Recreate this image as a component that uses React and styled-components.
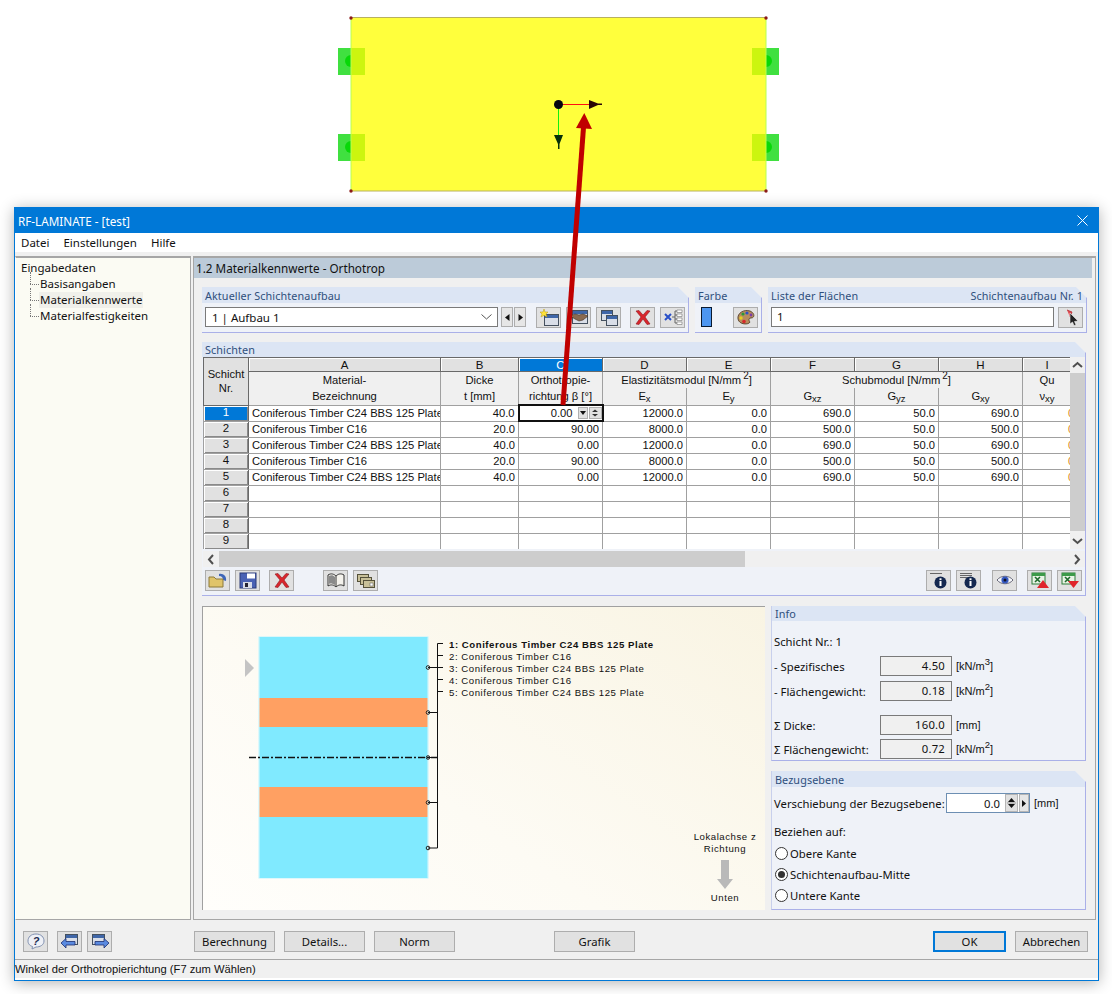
import React from 'react';
import styled, { createGlobalStyle } from 'styled-components';

const Global = createGlobalStyle`
  html, body { margin: 0; padding: 0; background: #fff; }
  * { box-sizing: border-box; }
  #root { font-family: "Liberation Sans", Arial, sans-serif; font-size: 11.5px; color: #111; }
`;

const Page = styled.div`
  position: relative;
  width: 1112px;
  height: 994px;
  overflow: hidden;
  background: #fff;
`;
const Canvas = styled.svg`
  display: block;
`;
const Window = styled.div`
  width: 1085px;
  height: 774px;
  margin-left: 14px;
  border: 1px solid #0078d7;
  background: #f0f0f0;
  box-shadow: 0 2px 14px rgba(0, 0, 0, 0.3);
  display: flex;
  flex-direction: column;
`;
const TitleBar = styled.div`
  height: 25px;
  flex: none;
  background: #0078d7;
  color: #fff;
  display: flex;
  align-items: center;
  justify-content: space-between;
  padding: 0 10px 0 3px;
  font-family: "Noto Sans", sans-serif;
  font-size: 11.7px;
`;
const MenuBar = styled.div`
  height: 19px;
  flex: none;
  background: #fff;
  display: flex;
  align-items: center;
  gap: 14px;
  padding: 0 0 0 6px;
  font-family: "Noto Sans", sans-serif;
  font-size: 11.5px;
`;
const Body = styled.div`
  height: 668px;
  flex: none;
  display: flex;
  gap: 2px;
  padding-top: 4px;
`;
const TreePane = styled.div`
  width: 176px;
  background: #fbfbf3;
  border: 1px solid #a6a6a6;
  border-top-width: 2px;
  border-left-color: #fff;
  padding: 2px 0 0 5px;
  font-family: "Noto Sans", sans-serif;
  font-size: 11.5px;
`;
const TreeRoot = styled.div`
  height: 16px;
  line-height: 15px;
`;
const TreeItem = styled.div`
  position: relative;
  height: 16px;
  line-height: 16px;
  margin-left: 18px;
  padding: 0 1px;
  width: fit-content;
  background: ${p => (p.$sel ? '#f0f0ea' : 'transparent')};
  &::before {
    content: '';
    position: absolute;
    left: -9px;
    top: 8px;
    width: 9px;
    border-top: 1px dotted #777;
  }
  &::after {
    content: '';
    position: absolute;
    left: -9px;
    top: -4px;
    height: 12px;
    border-left: 1px dotted #777;
  }
`;
const MainPane = styled.div`
  width: 903px;
  border: 1px solid #a6a6a6;
  border-top-width: 2px;
  display: flex;
  flex-direction: column;
  padding-right: 0;
`;
const SectionTitle = styled.div`
  height: 20px;
  flex: none;
  margin-right: 3px;
  background: #bccbd9;
  padding-left: 2px;
  line-height: 20px;
  font-family: "Noto Sans", sans-serif;
  font-size: 11.7px;
`;
const Content = styled.div`
  padding: 9px 8px 0 8px;
  display: flex;
  flex-direction: column;
`;
const GroupRow = styled.div`
  display: flex;
  gap: 6px;
  height: 46px;
  flex: none;
`;
const Group = styled.div`
  width: ${p => p.$w}px;
  height: ${p => (p.$h ? p.$h + 'px' : 'auto')};
  flex: none;
  display: flex;
  flex-direction: column;
  background: #eff2f8;
  border-right: 1px solid #aab0e8;
  border-bottom: 1px solid #aab0e8;
  clip-path: polygon(0 0, calc(100% - 11px) 0, 100% 11px, 100% 100%, 0 100%);
  margin-top: ${p => p.$mt || 0}px;
`;
const GroupHead = styled.div`
  height: ${p => p.$h || 16}px;
  flex: none;
  background: #dce5f4;
  color: #2f4f7c;
  padding: 0 3px 0 3px;
  display: flex;
  justify-content: space-between;
  align-items: center;
  font-family: "Noto Sans", sans-serif;
  font-size: 10.8px;
  letter-spacing: 0.1px;
`;
const GroupBody = styled.div`
  flex: 1;
  display: flex;
  align-items: flex-start;
  padding: 4px 3px 0 3px;
`;
const Combo = styled.div`
  width: 293px;
  height: 20px;
  background: #fff;
  border: 1px solid #7a7a7a;
  display: flex;
  align-items: center;
  justify-content: space-between;
  padding: 0 5px 0 6px;
  font-family: "Noto Sans", sans-serif;
  font-size: 11.5px;
`;
const NavBtn = styled.div`
  width: 12px;
  height: 20px;
  margin-left: ${p => p.$ml || 0}px;
  background: #e6e6e6;
  border: 1px solid #adadad;
  display: flex;
  align-items: center;
  justify-content: center;
`;
const IconBtn = styled.div`
  width: 25px;
  height: 21px;
  flex: none;
  margin-left: ${p => p.$ml || 0}px;
  background: #e1e1e1;
  border: 1px solid #adadad;
  display: flex;
  align-items: center;
  justify-content: center;
`;
const Swatch = styled.div`
  width: 12px;
  height: 20px;
  margin: 0 21px 0 3px;
  background: #4d96f0;
  border: 1px solid #0a1a30;
`;
const TextInput = styled.div`
  width: 284px;
  height: 20px;
  margin-right: 4px;
  background: #fff;
  border: 1px solid #7a7a7a;
  padding-left: 5px;
  line-height: 18px;
  font-family: "Noto Sans", sans-serif;
  font-size: 11.5px;
`;
const TableGroup = styled(Group)`
  height: 254px;
  background: #eff2f8;
  margin-top: 9px;
`;
const TableArea = styled.div`
  display: flex;
  height: 192px;
  margin-left: 1px;
  flex: none;
`;
const TableClip = styled.div`
  width: 867px;
  height: 192px;
  overflow: hidden;
  background: #fff;
`;
const Table = styled.table`
  table-layout: fixed;
  width: 868px;
  border-collapse: collapse;
  font-size: 11.2px;
  & col:nth-child(1) { width: 45px; }
  & col:nth-child(2) { width: 192px; }
  & col:nth-child(3) { width: 78px; }
  & col:nth-child(n+4):nth-child(-n+9) { width: 84px; }
  & col:nth-child(10) { width: 49px; }
`;
const Corner = styled.th`
  background: #e1e1e1;
  border: 1px solid #696969;
  font-weight: normal;
  padding: 0 0 0 0;
  line-height: 14px;
  vertical-align: middle;
`;
const Letter = styled.th`
  height: 14px;
  padding: 0;
  line-height: 12px;
  font-weight: normal;
  font-size: 11.5px;
  background: ${p => (p.$active ? '#0078d7' : '#e1e1e1')};
  color: ${p => (p.$active ? '#fff' : '#111')};
  border: 1px solid #696969;
  box-shadow: inset 1px 1px 0 #fff;
`;
const SubHead = styled.th`
  background: #f0f0f0;
  font-weight: normal;
  padding: 0;
  height: 16px;
  line-height: 16px;
  border-left: 1px solid #a0a0a0;
  border-right: 1px solid #a0a0a0;
  border-bottom: 1px solid #a0a0a0;
  white-space: nowrap;
  overflow: hidden;
  sup { font-size: 10px; line-height: 0; margin-left: 2px; }
  sub { font-size: 9.5px; line-height: 0; vertical-align: -2px; }
`;
const RowHead = styled.td`
  height: 16px;
  padding: 0 0 2px 0;
  line-height: 12px;
  text-align: center;
  font-size: 11.5px;
  background: ${p => (p.$active ? '#0078d7' : '#e1e1e1')};
  color: ${p => (p.$active ? '#fff' : '#111')};
  border: 1px solid #a0a0a0;
  border-right: 1px solid #696969;
  box-shadow: inset 1px 1px 0 #fff, inset -1px -1px 0 #8a8a8a;
`;
const Cell = styled.td`
  height: 16px;
  padding: 0 3px;
  line-height: 12px;
  text-align: ${p => (p.$left ? 'left' : 'right')};
  border: 1px solid #a0a0a0;
  white-space: nowrap;
  overflow: hidden;
  background: #fff;
`;
const ClippedCell = styled(Cell)`
  text-align: left;
  padding: 0 0 0 45px;
  color: #d98a1f;
`;
const ActiveCell = styled.td`
  height: 16px;
  padding: 0;
  border: 2px solid #111;
  background: #fff;
`;
const ActiveInner = styled.div`
  display: flex;
  align-items: center;
  justify-content: flex-end;
  height: 13px;
  line-height: 12px;
`;
const DropBtn = styled.span`
  width: 10px;
  height: 12px;
  margin-left: 5px;
  background: #e1e1e1;
  border: 1px solid #b0b0b0;
  display: flex;
  align-items: center;
  justify-content: center;
`;
const CellSpin = styled.span`
  width: 13px;
  height: 12px;
  margin-left: 1px;
  background: #e1e1e1;
  border: 1px solid #b0b0b0;
  display: flex;
  align-items: center;
  justify-content: center;
`;
const VScroll = styled.div`
  width: 15px;
  height: 192px;
  flex: none;
  background: #f0f0f0;
  display: flex;
  flex-direction: column;
`;
const ScrollBtn = styled.div`
  flex: none;
  width: ${p => p.$w || 15}px;
  height: ${p => p.$h || 15}px;
  display: flex;
  align-items: center;
  justify-content: center;
  background: #f0f0f0;
`;
const VThumb = styled.div`
  height: 158px;
  flex: none;
  background: #cdcdcd;
`;
const HScroll = styled.div`
  height: 16px;
  margin: 2px 0 0 1px;
  width: 882px;
  flex: none;
  background: #f0f0f0;
  display: flex;
  align-items: center;
  justify-content: space-between;
`;
const HThumb = styled.div`
  width: 526px;
  height: 16px;
  background: #cdcdcd;
`;
const HTrack = styled.div`
  flex: 1;
`;
const TableToolbar = styled.div`
  display: flex;
  align-items: center;
  padding: 3px 3px 0 3px;
  background: #eff2f8;
`;
const Grow = styled.div`
  flex: 1;
`;
const Split = styled.div`
  display: flex;
  gap: 6px;
  margin-top: 10px;
  height: 304px;
`;
const Preview = styled.div`
  position: relative;
  width: 563px;
  height: 304px;
  border-left: 1px solid #a0a0a0;
  border-top: 1px solid #a0a0a0;
  background: linear-gradient(35deg, #fffefb 0%, #fdfbf4 40%, #f9f4e3 100%);
`;
const LegendSvg = styled.svg`
  display: block;
  font-family: "Liberation Sans", Arial, sans-serif;
  font-size: 9.6px;
  letter-spacing: 0.55px;
  fill: #111;
`;
const SideCol = styled.div`
  display: flex;
  flex-direction: column;
  gap: 10px;
  width: 315px;
`;
const SideGroup = styled(Group)`
  border-left: 1px solid #c8d0ec;
`;
const InfoBody = styled.div`
  padding: 6px 2px 0 2px;
  font-family: "Noto Sans", sans-serif;
  font-size: 11.3px;
`;
const InfoLine = styled.div`
  height: 20px;
  display: flex;
  align-items: center;
  margin-top: ${p => p.$mt ?? 4}px;
`;
const InfoLabel = styled.div`
  width: 106px;
  flex: none;
`;
const ReadField = styled.div`
  width: 72px;
  height: 20px;
  flex: none;
  background: #f0f0f0;
  border: 1px solid #7a7a7a;
  text-align: right;
  padding-right: 6px;
  line-height: 18px;
  font-family: "Noto Sans", sans-serif;
  letter-spacing: 0.2px;
`;
const Unit = styled.div`
  margin-left: 4px;
  font-family: "Liberation Sans", Arial, sans-serif;
  font-size: 11px;
  sup { font-size: 9.5px; line-height: 0; }
`;
const RefBody = styled(InfoBody)`
  padding-top: 6px;
`;
const OffsetInput = styled.div`
  width: 84px;
  height: 20px;
  flex: none;
  background: #fff;
  border: 1px solid #6d8fb3;
  display: flex;
  align-items: center;
  justify-content: flex-end;
  padding-right: 0;
`;
const OffsetValue = styled.span`
  margin-right: 5px;
`;
const SpinBtn = styled.div`
  width: 13px;
  height: 18px;
  background: #e1e1e1;
  border: 1px solid #b5b5b5;
  display: flex;
  align-items: center;
  justify-content: center;
`;
const ArrowBtn = styled.div`
  width: 10px;
  height: 18px;
  margin: 0 0 0 1px;
  background: #e6e6e6;
  border: 1px solid #b5b5b5;
  display: flex;
  align-items: center;
  justify-content: center;
`;
const OffsetLabel = styled.div`
  width: 172px;
  flex: none;
`;
const RefLabel = styled.div`
  height: 16px;
  line-height: 16px;
  margin-top: 11px;
`;
const RadioRow = styled.div`
  display: flex;
  align-items: center;
  height: 16px;
  margin-top: 5px;
  gap: 2px;
  margin-left: 1px;
`;
const Radio = styled.span`
  width: 13px;
  height: 13px;
  flex: none;
  border-radius: 50%;
  background: #fff;
  border: 1px solid #333;
  display: flex;
  align-items: center;
  justify-content: center;
  &::after {
    content: '';
    display: ${p => (p.$on ? 'block' : 'none')};
    width: 7px;
    height: 7px;
    border-radius: 50%;
    background: #333;
  }
`;
const Footer = styled.div`
  height: 39px;
  flex: none;
  display: flex;
  align-items: flex-start;
  padding: 11px 0 0 8px;
`;
const TextBtn = styled.div`
  width: ${p => p.$w || 81}px;
  height: 21px;
  flex: none;
  margin-left: ${p => p.$ml || 0}px;
  background: #e1e1e1;
  border: ${p => (p.$primary ? '2px solid #0078d7' : '1px solid #adadad')};
  display: flex;
  align-items: center;
  justify-content: center;
  font-family: "Noto Sans", sans-serif;
  font-size: 11.3px;
`;
const StatusBar = styled.div`
  height: 21px;
  flex: none;
  border-top: 1px solid #a6a6a6;
  border-bottom: 2px solid #fff;
  line-height: 18px;
  font-size: 11.2px;
  white-space: nowrap;
`;
const Overlay = styled.svg`
  position: absolute;
  left: 0;
  top: 0;
  pointer-events: none;
`;

const Ico = ({ children }) => (
  <svg width="20" height="17" viewBox="0 0 20 17">{children}</svg>
);
const Win = ({ x, y, w, h }) => (
  <g>
    <rect x={x + 0.5} y={y + 0.5} width={w} height={h} fill="#d9dee8" stroke="#44505f" />
    <rect x={x + 1} y={y + 1} width={w - 1} height="3" fill="#3f66a8" />
  </g>
);
const Cross = () => (
  <path d="M3 2 L6 1.5 L10 6 L14 1.5 L17 2 L12 8 L17 15 L14 15.5 L10 10 L6 15.5 L3 15 L8 8 Z" fill="#d9262c" stroke="#8e1a20" strokeWidth=".6" />
);
const TriL = () => <svg width="5" height="7" viewBox="0 0 5 7"><path d="M4.5 0 L0 3.5 L4.5 7Z" fill="#111" /></svg>;
const TriR = () => <svg width="5" height="7" viewBox="0 0 5 7"><path d="M.5 0 L5 3.5 L.5 7Z" fill="#111" /></svg>;
const Chevron = ({ dir }) => {
  const d = { up: 'M1 7 L5.5 3 L10 7', down: 'M1 3 L5.5 7 L10 3', left: 'M7 1 L3 5.5 L7 10', right: 'M3 1 L7 5.5 L3 10' }[dir];
  return <svg width="11" height="11" viewBox="0 0 11 11"><path d={d} fill="none" stroke="#505050" strokeWidth="2" /></svg>;
};
const Spin = () => (
  <svg width="9" height="14" viewBox="0 0 9 14">
    <path d="M1 6 L4.5 2 L8 6Z M1 8 L4.5 12 L8 8Z" fill="#111" />
    <path d="M0 7 H9" stroke="#999" />
  </svg>
);
const Excel = ({ up }) => (
  <Ico>
    <rect x="2" y="1" width="13" height="11" fill="#e8f3e4" stroke="#2f7d3a" />
    <rect x="2" y="1" width="13" height="3" fill="#3c9a48" />
    <path d="M5 5 L10 10 M10 5 L5 10" stroke="#1f6a2c" strokeWidth="1.6" />
    <path d={up ? 'M13 8 L19 16 H7Z' : 'M8 9 H19 L13.5 16Z'} fill="#e0242a" />
  </Ico>
);
const InfoIco = ({ lines }) => (
  <Ico>
    {Array.from({ length: lines }).map((_, i) => (
      <path key={i} d={`M1 ${1.5 + i * 2} H13`} stroke="#666" />
    ))}
    <circle cx="11.5" cy="10.5" r="6" fill="#14284f" />
    <rect x="10.5" y="9" width="2" height="5" fill="#fff" />
    <rect x="10.5" y="6.3" width="2" height="1.8" fill="#fff" />
  </Ico>
);

const rows = [
  [1, 'Coniferous Timber C24 BBS 125 Plate', '40.0', '0.00', '12000.0', '0.0', '690.0', '50.0', '690.0'],
  [2, 'Coniferous Timber C16', '20.0', '90.00', '8000.0', '0.0', '500.0', '50.0', '500.0'],
  [3, 'Coniferous Timber C24 BBS 125 Plate', '40.0', '0.00', '12000.0', '0.0', '690.0', '50.0', '690.0'],
  [4, 'Coniferous Timber C16', '20.0', '90.00', '8000.0', '0.0', '500.0', '50.0', '500.0'],
  [5, 'Coniferous Timber C24 BBS 125 Plate', '40.0', '0.00', '12000.0', '0.0', '690.0', '50.0', '690.0'],
  [6], [7], [8], [9],
];
const letters = ['A', 'B', 'C', 'D', 'E', 'F', 'G', 'H', 'I'];
const legend = [
  '1: Coniferous Timber C24 BBS 125 Plate',
  '2: Coniferous Timber C16',
  '3: Coniferous Timber C24 BBS 125 Plate',
  '4: Coniferous Timber C16',
  '5: Coniferous Timber C24 BBS 125 Plate',
];

const Plate = () => {
  const pads = [[338, 48], [338, 134], [752, 48], [752, 134]];
  return (
    <Canvas width="1112" height="207">
      {pads.map(([x, y], i) => (
        <g key={i}>
          <rect x={x} y={y} width="27" height="27" fill="#40e040" />
          <circle cx={i < 2 ? 351 : 766} cy={y + 13} r="6" fill="#08d808" />
        </g>
      ))}
      <rect x="351" y="18" width="415" height="173" fill="#ffff3c" />
      {pads.map(([x, y], i) => (
        <rect key={i} x={i < 2 ? 351 : x} y={y} width={i < 2 ? 14 : 14} height="27" fill="#ccf50f" />
      ))}
      <path d="M351 18 V191 M766 18 V191" stroke="#b8ff50" />
      <path d="M351 17.5 H766 M351 191 H766" stroke="#b8b060" />
      {[[351, 18], [766, 18], [351, 191], [766, 191]].map(([x, y], i) => (
        <circle key={i} cx={x} cy={y} r="1.7" fill="#8a1a1a" />
      ))}
      <path d="M558 104.5 H589" stroke="#ff1010" strokeWidth="1" />
      <path d="M558.5 105 V135" stroke="#10f010" strokeWidth="1" />
      <circle cx="558.5" cy="104.5" r="4.5" fill="#050510" />
      <path d="M589 100 L598 103.5 H602 V105 H598 L589 109Z" fill="#2a0606" />
      <path d="M554 135 H563 L559.5 144 V149 H558 V144Z" fill="#06300a" />
    </Canvas>
  );
};

const StackDrawing = () => {
  const ox = 203, oy = 607;
  const X = v => v - ox, Y = v => v - oy;
  const layers = [[637, 61, '#80eaff'], [698, 29, '#ffa062'], [727, 60, '#80eaff'], [787, 30, '#ffa062'], [817, 61, '#80eaff']];
  return (
    <LegendSvg width="562" height="303">
      <rect x={X(259)} y={Y(637)} width="169" height="241" fill="none" stroke="#bdf3ff" strokeWidth="1" />
      {layers.map(([y, h, c], i) => <rect key={i} x={X(259.5)} y={Y(y)} width="168" height={h} fill={c} />)}
      <path d={`M${X(245)} ${Y(659)} L${X(254)} ${Y(668)} L${X(245)} ${Y(677)}Z`} fill="#c4c4c4" />
      <path d={`M${X(443)} ${Y(643.5)} H${X(437.5)} V${Y(848)} H${X(428)}`} fill="none" stroke="#111" />
      {[655.5, 667.5, 679.5, 691.5].map(y => <path key={y} d={`M${X(438)} ${Y(y)} H${X(443)}`} stroke="#111" />)}
      {[667.5, 712.5, 757.5, 802.5].map(y => <path key={y} d={`M${X(428)} ${Y(y)} H${X(438)}`} stroke="#111" />)}
      {[667.5, 712.5, 757.5, 802.5, 848].map(y => <circle key={y} cx={X(428)} cy={Y(y)} r="1.8" fill="none" stroke="#222" />)}
      <path d={`M${X(249)} ${Y(757.5)} H${X(437)}`} stroke="#111" strokeWidth="1.6" strokeDasharray="7 2 2 2" />
      {legend.map((t, i) => (
        <text key={i} x={X(449)} y={Y(647.5 + i * 12)} fontWeight={i === 0 ? 'bold' : 'normal'}>{t}</text>
      ))}
      <text x={X(725)} y={Y(840)} textAnchor="middle">Lokalachse z</text>
      <text x={X(725)} y={Y(852)} textAnchor="middle">Richtung</text>
      <path d={`M${X(721)} ${Y(860)} H${X(729)} V${Y(879)} H${X(733)} L${X(725)} ${Y(889)} L${X(717)} ${Y(879)} H${X(721)}Z`} fill="#b9b9b9" />
      <text x={X(725)} y={Y(901)} textAnchor="middle">Unten</text>
    </LegendSvg>
  );
};

export default function App() {
  return (
    <Page>
      <Global />
      <Plate />
      <Window>
        <TitleBar>
          <span>RF-LAMINATE - [test]</span>
          <svg width="11" height="11" viewBox="0 0 11 11"><path d="M.5 .5 L10.5 10.5 M10.5 .5 L.5 10.5" stroke="#fff" strokeWidth="1" /></svg>
        </TitleBar>
        <MenuBar><span>Datei</span><span>Einstellungen</span><span>Hilfe</span></MenuBar>
        <Body>
          <TreePane>
            <TreeRoot>Eingabedaten</TreeRoot>
            <TreeItem>Basisangaben</TreeItem>
            <TreeItem $sel>Materialkennwerte</TreeItem>
            <TreeItem>Materialfestigkeiten</TreeItem>
          </TreePane>
          <MainPane>
            <SectionTitle>1.2 Materialkennwerte - Orthotrop</SectionTitle>
            <Content>
              <GroupRow>
                <Group $w={487}>
                  <GroupHead>Aktueller Schichtenaufbau</GroupHead>
                  <GroupBody>
                    <Combo>
                      <span>1 | Aufbau 1</span>
                      <svg width="11" height="6" viewBox="0 0 11 6"><path d="M.5 .5 L5.5 5 L10.5 .5" fill="none" stroke="#555" /></svg>
                    </Combo>
                    <NavBtn $ml={3}><TriL /></NavBtn>
                    <NavBtn $ml={1}><TriR /></NavBtn>
                    <IconBtn $ml={10}>
                      <Ico>
                        <Win x={5} y={5} w={14} h={11} />
                        <path d="M5 0 L6 3 L9 3 L7 5 L8 8 L5 6.3 L2 8 L3 5 L1 3 L4 3Z" fill="#ffe23a" stroke="#b89a10" strokeWidth=".5" />
                      </Ico>
                    </IconBtn>
                    <IconBtn $ml={5}>
                      <Ico>
                        <Win x={3} y={1} w={15} h={13} />
                        <path d="M1 7 L6 5 L10 6 L14 5 L19 7 L14 11 L10 12 L6 10Z" fill="#8a6a50" stroke="#3c2c20" strokeWidth=".6" />
                      </Ico>
                    </IconBtn>
                    <IconBtn $ml={5}>
                      <Ico>
                        <Win x={2} y={1} w={11} h={10} />
                        <Win x={7} y={6} w={11} h={10} />
                      </Ico>
                    </IconBtn>
                    <IconBtn $ml={9}><Ico><Cross /></Ico></IconBtn>
                    <IconBtn $ml={5}>
                      <Ico>
                        <path d="M2 5 L8 11 M8 5 L2 11" stroke="#2a50c8" strokeWidth="2" />
                        <path d="M9 8 H12 M12 2 V14 M12 2 H14 M12 6 H14 M12 10 H14 M12 14 H14" stroke="#666" fill="none" />
                        <path d="M14 1 H19 V3.5 H14Z M14 5 H19 V7.5 H14Z M14 9 H19 V11.5 H14Z M14 13 H19 V15.5 H14Z" fill="#fff" stroke="#777" strokeWidth=".6" />
                      </Ico>
                    </IconBtn>
                  </GroupBody>
                </Group>
                <Group $w={67}>
                  <GroupHead>Farbe</GroupHead>
                  <GroupBody>
                    <Swatch />
                    <IconBtn>
                      <Ico>
                        <path d="M2 10 C1 4 8 0 14 2 C19 4 19 9 15 9 C12 9 13 12 14 13 C13 16 3 16 2 10Z" fill="#b78d5e" stroke="#4a3520" strokeWidth=".8" />
                        <circle cx="7" cy="5" r="1.6" fill="#2b9a3a" />
                        <circle cx="11" cy="4" r="1.6" fill="#2a50c8" />
                        <circle cx="15" cy="6" r="1.4" fill="#7a3aa8" />
                        <circle cx="5" cy="9" r="1.7" fill="#e6d020" />
                        <circle cx="8" cy="12.5" r="1.8" fill="#d6282c" />
                      </Ico>
                    </IconBtn>
                  </GroupBody>
                </Group>
                <Group $w={319}>
                  <GroupHead><span>Liste der Flächen</span><span>Schichtenaufbau Nr. 1</span></GroupHead>
                  <GroupBody>
                    <TextInput>1</TextInput>
                    <IconBtn>
                      <Ico>
                        <path d="M6 1 L11 3 L9 8" fill="#e04a50" stroke="#b02a30" strokeWidth=".8" />
                        <path d="M9 4 L17 12 L13.5 12.5 L15 16 L13 16.5 L11.5 13 L9 15Z" fill="#222" stroke="#eee" strokeWidth=".6" />
                      </Ico>
                    </IconBtn>
                  </GroupBody>
                </Group>
              </GroupRow>
              <TableGroup $w={884}>
                <GroupHead $h={15}>Schichten</GroupHead>
                <TableArea>
                  <TableClip>
                    <Table>
                      <colgroup>
                        <col /><col /><col /><col /><col /><col /><col /><col /><col /><col />
                      </colgroup>
                      <thead>
                        <tr>
                          <Corner rowSpan={3}>Schicht<br />Nr.</Corner>
                          {letters.map(l => <Letter key={l} $active={l === 'C'}>{l}</Letter>)}
                        </tr>
                        <tr>
                          <SubHead rowSpan={2}>Material-<br />Bezeichnung</SubHead>
                          <SubHead rowSpan={2}>Dicke<br />t [mm]</SubHead>
                          <SubHead rowSpan={2}>Orthotropie-<br />richtung β [°]</SubHead>
                          <SubHead colSpan={2} style={{ borderBottom: 0 }}>Elastizitätsmodul [N/mm<sup>2</sup>]</SubHead>
                          <SubHead colSpan={3} style={{ borderBottom: 0 }}>Schubmodul [N/mm<sup>2</sup>]</SubHead>
                          <SubHead style={{ borderBottom: 0 }}>Qu</SubHead>
                        </tr>
                        <tr>
                          <SubHead>E<sub>x</sub></SubHead>
                          <SubHead>E<sub>y</sub></SubHead>
                          <SubHead>G<sub>xz</sub></SubHead>
                          <SubHead>G<sub>yz</sub></SubHead>
                          <SubHead>G<sub>xy</sub></SubHead>
                          <SubHead>ν<sub>xy</sub></SubHead>
                        </tr>
                      </thead>
                      <tbody>
                        {rows.map((r, i) => (
                          <tr key={r[0]}>
                            <RowHead $active={i === 0}>{r[0]}</RowHead>
                            <Cell $left>{r[1]}</Cell>
                            <Cell>{r[2]}</Cell>
                            {i === 0 ? (
                              <ActiveCell>
                                <ActiveInner>
                                  <span>0.00</span>
                                  <DropBtn><svg width="6" height="4" viewBox="0 0 6 4"><path d="M0 0 H6 L3 4Z" fill="#111" /></svg></DropBtn>
                                  <CellSpin><svg width="8" height="8" viewBox="0 0 8 8"><path d="M1 3 L4 .5 L7 3Z M1 5 L4 7.5 L7 5Z" fill="#333" /></svg></CellSpin>
                                </ActiveInner>
                              </ActiveCell>
                            ) : (
                              <Cell>{r[3]}</Cell>
                            )}
                            <Cell>{r[4]}</Cell>
                            <Cell>{r[5]}</Cell>
                            <Cell>{r[6]}</Cell>
                            <Cell>{r[7]}</Cell>
                            <Cell>{r[8]}</Cell>
                            <ClippedCell>{r[1] ? '0.000' : ''}</ClippedCell>
                          </tr>
                        ))}
                      </tbody>
                    </Table>
                  </TableClip>
                  <VScroll>
                    <ScrollBtn $h={16}><Chevron dir="up" /></ScrollBtn>
                    <VThumb />
                    <Grow />
                    <ScrollBtn $h={16}><Chevron dir="down" /></ScrollBtn>
                  </VScroll>
                </TableArea>
                <HScroll>
                  <ScrollBtn $w={16} $h={16}><Chevron dir="left" /></ScrollBtn>
                  <HThumb />
                  <HTrack />
                  <ScrollBtn $w={15} $h={16}><Chevron dir="right" /></ScrollBtn>
                </HScroll>
                <TableToolbar>
                  <IconBtn>
                    <Ico>
                      <path d="M11 2 C15 1 19 4 18 9 L15 8 C15 6 14 4 11 4Z" fill="#3f66b8" />
                      <path d="M1 5 H6 L8 7 H15 V15 H1Z" fill="#e0c46a" stroke="#8d7a3a" />
                    </Ico>
                  </IconBtn>
                  <IconBtn $ml={5}>
                    <Ico>
                      <rect x="2" y="1" width="16" height="15" fill="#4a62b4" stroke="#2a3a78" />
                      <rect x="9" y="1.5" width="8" height="5" fill="#fff" />
                      <rect x="5" y="10" width="9" height="6" fill="#d8dce8" />
                      <rect x="7" y="11" width="3" height="4" fill="#223" />
                    </Ico>
                  </IconBtn>
                  <IconBtn $ml={9}><Ico><Cross /></Ico></IconBtn>
                  <IconBtn $ml={29}>
                    <Ico>
                      <path d="M2 3 C5 1 8 2 10 4 C12 2 15 1 18 3 V14 C15 12 12 13 10 15 C8 13 5 12 2 14Z" fill="#f4f2ec" stroke="#333" />
                      <path d="M10 4 V15" stroke="#333" />
                      <path d="M3 4 C5 3 7 3 9 5 V13 C7 12 5 11 3 12Z" fill="#8a8a8a" />
                    </Ico>
                  </IconBtn>
                  <IconBtn $ml={5}>
                    <Ico>
                      <rect x="1.5" y="2.5" width="11" height="7" fill="#c8c098" stroke="#55513a" />
                      <rect x="4.5" y="5.5" width="11" height="7" fill="#c8c098" stroke="#55513a" />
                      <rect x="7.5" y="8.5" width="11" height="7" fill="#c8c098" stroke="#55513a" />
                      <rect x="14" y="11" width="3" height="3" fill="#fff" stroke="#555" strokeWidth=".5" />
                    </Ico>
                  </IconBtn>
                  <Grow />
                  <IconBtn><InfoIco lines={1} /></IconBtn>
                  <IconBtn $ml={5}><InfoIco lines={3} /></IconBtn>
                  <IconBtn $ml={11}>
                    <Ico>
                      <path d="M2 8 C6 3 14 3 18 8 C14 13 6 13 2 8Z" fill="#f4f6fa" stroke="#667" />
                      <circle cx="10" cy="8" r="3.6" fill="#3458c0" />
                      <circle cx="10" cy="8" r="1.5" fill="#112" />
                    </Ico>
                  </IconBtn>
                  <IconBtn $ml={10}><Excel up /></IconBtn>
                  <IconBtn $ml={5}><Excel /></IconBtn>
                </TableToolbar>
              </TableGroup>
              <Split>
                <Preview><StackDrawing /></Preview>
                <SideCol>
                  <SideGroup $w={315} $h={155}>
                    <GroupHead $h={15}>Info</GroupHead>
                    <InfoBody>
                      <InfoLine $mt={0} style={{ height: 16, marginTop: 6 }}>Schicht Nr.: 1</InfoLine>
                      <InfoLine $mt={7}><InfoLabel>- Spezifisches</InfoLabel><ReadField>4.50</ReadField><Unit>[kN/m<sup>3</sup>]</Unit></InfoLine>
                      <InfoLine $mt={5}><InfoLabel>- Flächengewicht:</InfoLabel><ReadField>0.18</ReadField><Unit>[kN/m<sup>2</sup>]</Unit></InfoLine>
                      <InfoLine $mt={14}><InfoLabel>Σ Dicke:</InfoLabel><ReadField>160.0</ReadField><Unit>[mm]</Unit></InfoLine>
                      <InfoLine $mt={4}><InfoLabel>Σ Flächengewicht:</InfoLabel><ReadField>0.72</ReadField><Unit>[kN/m<sup>2</sup>]</Unit></InfoLine>
                    </InfoBody>
                  </SideGroup>
                  <SideGroup $w={315} $h={139}>
                    <GroupHead>Bezugsebene</GroupHead>
                    <RefBody>
                      <InfoLine $mt={0}>
                        <OffsetLabel>Verschiebung der Bezugsebene:</OffsetLabel>
                        <OffsetInput>
                          <OffsetValue>0.0</OffsetValue>
                          <SpinBtn><Spin /></SpinBtn>
                          <ArrowBtn><svg width="4" height="7" viewBox="0 0 4 7"><path d="M0 0 L4 3.5 L0 7Z" fill="#111" /></svg></ArrowBtn>
                        </OffsetInput>
                        <Unit>[mm]</Unit>
                      </InfoLine>
                      <RefLabel>Beziehen auf:</RefLabel>
                      <RadioRow style={{ marginTop: 5 }}><Radio /><span>Obere Kante</span></RadioRow>
                      <RadioRow><Radio $on /><span>Schichtenaufbau-Mitte</span></RadioRow>
                      <RadioRow><Radio /><span>Untere Kante</span></RadioRow>
                    </RefBody>
                  </SideGroup>
                </SideCol>
              </Split>
            </Content>
          </MainPane>
        </Body>
        <Footer>
          <IconBtn>
            <Ico>
              <path d="M10 1 C15 1 18 4 18 8 C18 12 14 14 10 14 L6 16 L6.5 13.5 C3 12.5 2 10 2 8 C2 4 5 1 10 1Z" fill="#eef0f6" stroke="#8090b0" />
              <text x="10" y="12" textAnchor="middle" fontSize="11" fontWeight="bold" fontStyle="italic" fill="#1a2a50">?</text>
            </Ico>
          </IconBtn>
          <IconBtn $ml={9}>
            <Ico>
              <Win x={5} y={1} w={12} h={10} />
              <path d="M1 10 L6 5.5 V8.5 H15 V12 H6 V15 Z" fill="#5a8ae0" stroke="#1c2f70" strokeWidth=".8" />
            </Ico>
          </IconBtn>
          <IconBtn $ml={5}>
            <Ico>
              <Win x={2} y={1} w={12} h={10} />
              <path d="M19 10 L14 5.5 V8.5 H5 V12 H14 V15 Z" fill="#5a8ae0" stroke="#1c2f70" strokeWidth=".8" />
            </Ico>
          </IconBtn>
          <TextBtn $ml={82}>Berechnung</TextBtn>
          <TextBtn $ml={9}>Details...</TextBtn>
          <TextBtn $ml={9}>Norm</TextBtn>
          <TextBtn $ml={99}>Grafik</TextBtn>
          <TextBtn $ml={298} $w={73} $primary>OK</TextBtn>
          <TextBtn $ml={9} $w={73}>Abbrechen</TextBtn>
        </Footer>
        <StatusBar>Winkel der Orthotropierichtung (F7 zum Wählen)</StatusBar>
      </Window>
      <Overlay width="1112" height="994">
        <path d="M563 405 L583.6 126" stroke="#c00000" strokeWidth="5" fill="none" />
        <path d="M584.3 113 L592 129 L576 128Z" fill="#c00000" />
      </Overlay>
    </Page>
  );
}
